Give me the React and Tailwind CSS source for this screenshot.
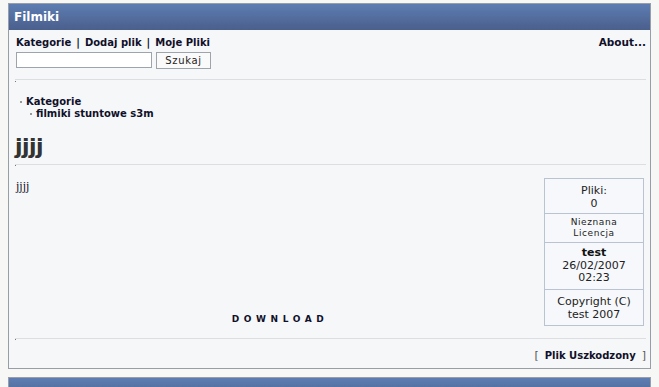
import React from "react";

const font = { fontFamily: '"DejaVu Sans", Verdana, sans-serif' };

function Panel({ title, children }) {
  return (
    <div className="mx-[8px] border border-[#989ea8] bg-[#f6f7f9]">
      <div className="h-[26px] flex items-center pl-[5px] bg-gradient-to-b from-[#5d7db2] to-[#4a5f8c] text-white font-bold text-[12px] leading-none">
        {title}
      </div>
      {children}
    </div>
  );
}

export default function App() {
  return (
    <div className="w-[659px] h-[387px] overflow-hidden bg-[#f7f7f5] pt-[3px] text-[#10102a]" style={font}>
      <Panel title="Filmiki">
        <div className="pl-[6px] pr-[4px] pt-[6px] pb-[6px]">
          <div className="flex justify-between h-[13px] items-center text-[10px] font-bold leading-[13px] pl-[1px]">
            <div className="flex items-center">
              <span>Kategorie</span>
              <span className="ml-[5px] mr-[5px]">|</span>
              <span>Dodaj plik</span>
              <span className="ml-[5px] mr-[5px]">|</span>
              <span>Moje Pliki</span>
            </div>
            <div className="text-[10.5px]">About...</div>
          </div>
          <div className="flex mt-[3px] pl-[1px] items-start">
            <div className="w-[136px] h-[16px] border border-[#9ea4ac] bg-white"></div>
            <div className="ml-[4px] w-[55px] h-[17px] border border-[#9ea4ac] bg-[#fafafa] flex items-center justify-center text-[10px] tracking-[0.7px] text-[#222]">
              Szukaj
            </div>
          </div>
          <div className="mt-[10px] h-px bg-[#dcdee2]"></div>
          <div className="h-px w-px bg-[#777] mt-px"></div>
          <div className="mt-[14px] text-[10px] font-bold leading-[12px]">
            <div className="flex items-center pl-[5px]">
              <span className="w-[2px] h-[2px] bg-[#999] mr-[4px]"></span>
              Kategorie
            </div>
            <div className="flex items-center pl-[15px]">
              <span className="w-[2px] h-[2px] bg-[#999] mr-[4px]"></span>
              filmiki stuntowe s3m
            </div>
          </div>
          <div className="mt-[15px] text-[22px] font-bold leading-[24px] text-[#333] tracking-[-0.5px]">jjjj</div>
          <div className="mt-[5px] h-px bg-[#dcdee2]"></div>
          <div className="h-px w-px bg-[#777]"></div>
          <div className="flex mt-[12px]">
            <div className="flex-1 flex flex-col justify-between pl-[1px]">
              <div className="text-[12px] leading-[14px] mt-[1px]" style={{ fontFamily: '"Liberation Serif", serif' }}>jjjj</div>
              <div className="text-center text-[9px] font-bold tracking-[4.6px] leading-[11px] mb-[1px]">DOWNLOAD</div>
            </div>
            <div className="w-[100px] mr-[2px] border border-[#b9c3d2] bg-[#f6f8fb] text-[11px] text-[#222] text-center">
              <div className="h-[35px] flex flex-col justify-center leading-[13px] pt-[2px] border-b border-[#b9c3d2]">
                <div>Pliki:</div>
                <div>0</div>
              </div>
              <div className="h-[29px] flex flex-col justify-center leading-[11px] text-[9px] tracking-[0.6px] border-b border-[#b9c3d2]">
                <div>Nieznana</div>
                <div>Licencja</div>
              </div>
              <div className="h-[47px] flex flex-col justify-center leading-[12.5px] border-b border-[#b9c3d2]">
                <div className="font-bold text-[#111]">test</div>
                <div>26/02/2007</div>
                <div>02:23</div>
              </div>
              <div className="h-[35px] flex flex-col justify-center leading-[13px]">
                <div>Copyright (C)</div>
                <div>test 2007</div>
              </div>
            </div>
          </div>
          <div className="mt-[12px] h-px bg-[#dcdee2]"></div>
          <div className="h-px w-px bg-[#777]"></div>
          <div className="mt-[9px] flex justify-end items-center text-[10px] leading-[13px]">
            <span className="text-[#555] text-[11px]">[</span>
            <span className="font-bold mx-[6px]">Plik Uszkodzony</span>
            <span className="text-[#555] text-[11px]">]</span>
          </div>
        </div>
      </Panel>
      <div className="mt-[8px]">
        <Panel title="" />
      </div>
    </div>
  );
}
